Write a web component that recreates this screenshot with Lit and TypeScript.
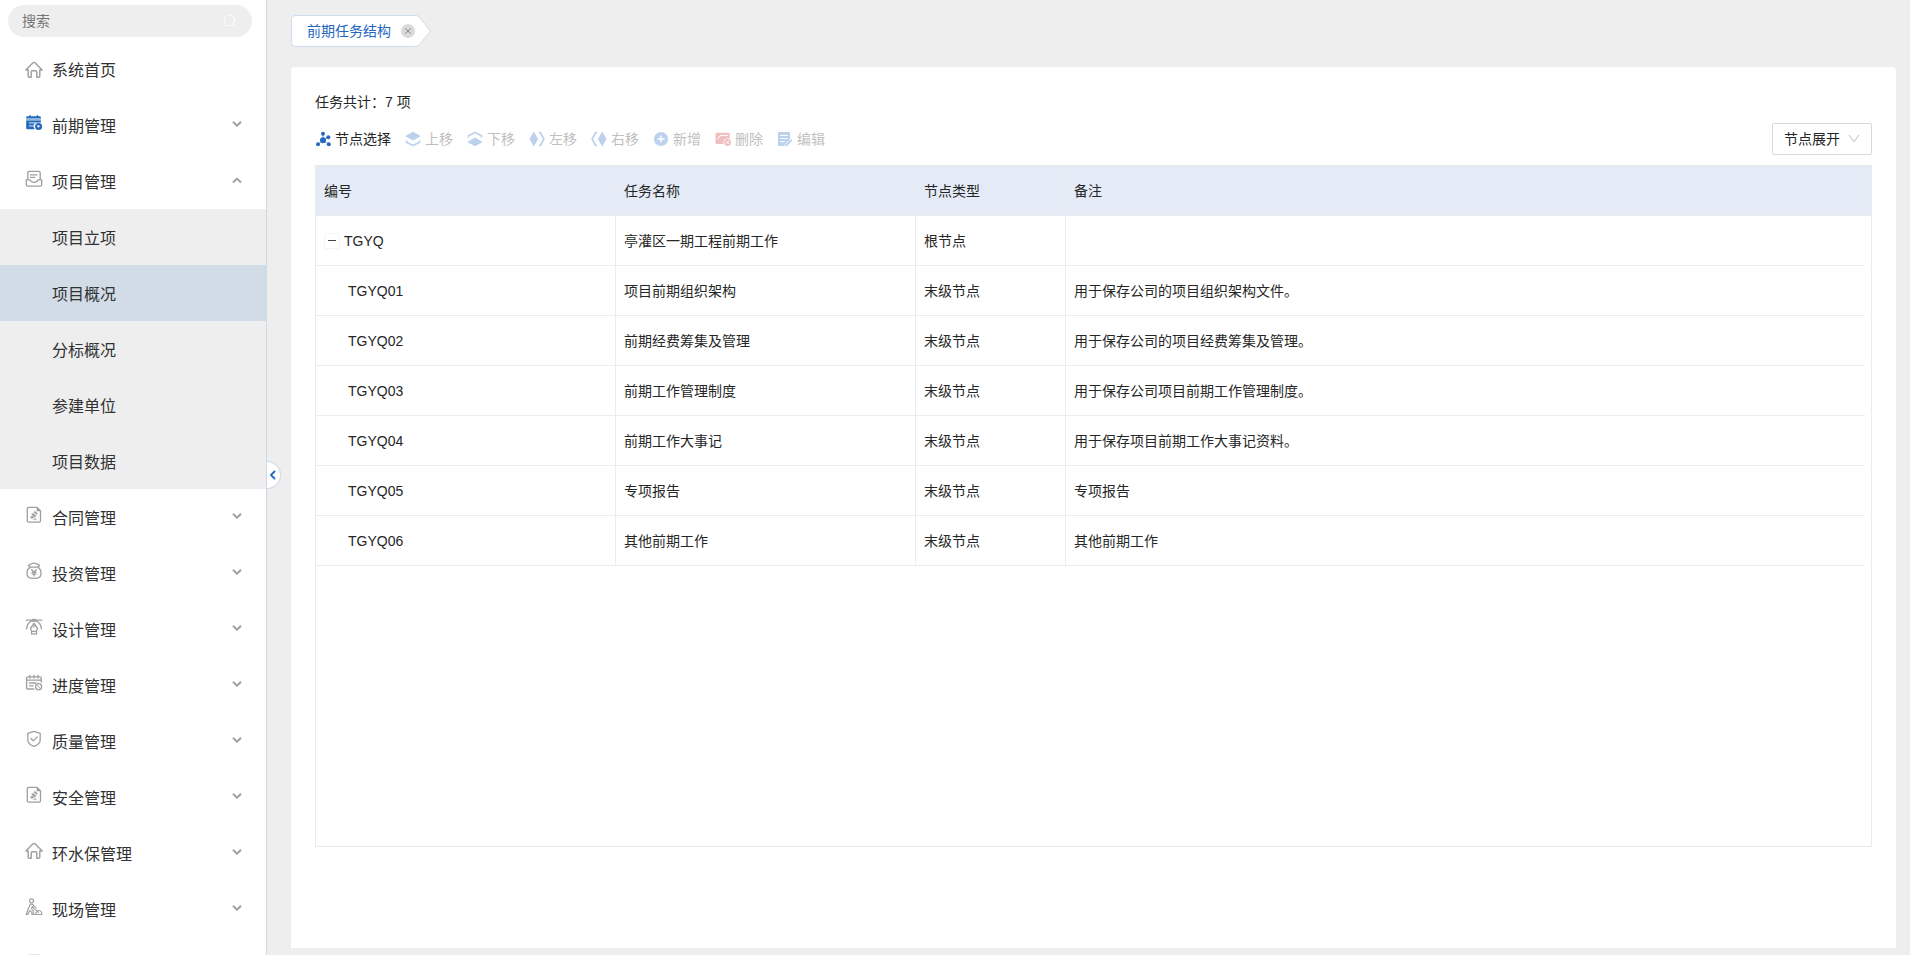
import { LitElement, html, svg, css, nothing } from "lit";
import { customElement, state } from "lit/decorators.js";
import { classMap } from "lit/directives/class-map.js";

const icon = (body: unknown, cls: string, box = "0 0 18 18") =>
  html`<svg class=${cls} viewBox=${box} fill="none" stroke="currentColor" stroke-linecap="round" stroke-linejoin="round">${body}</svg>`;

const permit = svg`<path stroke-width="1.350" d="M3.600 1.400H12L15.500 5v9.800a1.300 1.300 0 0 1-1.300 1.300H3.600a1.300 1.300 0 0 1-1.300-1.300V2.700a1.300 1.300 0 0 1 1.300-1.300z"/><path d="M12 1.600V5h3.400z" fill="currentColor" stroke-width=".6"/><path d="M10 5.200l2.600 2.300-1.100 1-2.600-2.200zM8.100 7.200l3.100 2.700-1.400 1.400-3.100-2.800zM5.300 11.200l1.800-1.400 1.700 1.500-1.600 1.200zM8.800 13.400l1.200-1 1.200 1z" fill="currentColor" stroke-width=".5"/>`;

const glyphs: Record<string, unknown> = {
  home: svg`<path stroke-width="1.450" d="M.9 8.900L8 1.800a1.400 1.400 0 0 1 2 0l7.100 7.100h-2.300v6.400a1 1 0 0 1-1 1h-2V11a1.300 1.300 0 0 0-1.300-1.300h-3A1.300 1.300 0 0 0 6.200 11v5.300h-2a1 1 0 0 1-1-1V8.900z"/>`,
  plan: svg`<g stroke="none"><path fill="#2468b8" d="M2.500 2.300h1.800V1.300h1.500v1h5.800v-1h1.500v1h1.600a1.200 1.200 0 0 1 1.200 1.200v1.100H1.200V3.500a1.200 1.200 0 0 1 1.300-1.200z"/><path fill="#8fb6e2" d="M1.200 4.600h14.700v1.800H1.200z"/><path fill="#2468b8" d="M1.200 6.400h14.700v2H12a4 4 0 0 0-2.300 6.900H2.500a1.300 1.300 0 0 1-1.300-1.300z"/><circle cx="13.600" cy="12.400" r="3.500" fill="#2468b8"/><circle cx="13.400" cy="12.300" r="1.200" fill="#d9e7f6"/></g><path stroke="#dbe8f7" d="M4.300 8.900h6.500M4.300 11.900h4"/>`,
  inbox: svg`<path stroke-width="1.350" d="M2.800 9V2.700a1.300 1.300 0 0 1 1.300-1.300h9.800a1.300 1.300 0 0 1 1.300 1.300V9M1.300 9.800h3.300l2 1.900c.8.800 4 .8 4.800 0l2-1.900h3.300v5a1.300 1.300 0 0 1-1.300 1.300H2.600a1.300 1.300 0 0 1-1.300-1.300zM5.500 4.900H12M5.500 7.400h4.300"/>`,
  permit,
  money: svg`<path stroke-width="1.300" d="M5.500 5.200C3.300 6.300 2 8.600 2 11c0 3.200 2 5.300 4.700 5.300h4.600c2.700 0 4.700-2.100 4.700-5.300 0-2.400-1.300-4.700-3.500-5.800zM5.400 5.200L3.300 3.500l2.300-1.400L9 1l3.400 1.100 2.300 1.400-2.100 1.700"/><path stroke-width="1.400" d="M6.700 7.800L9 10.300l2.300-2.500M9 10v4M7 10.400h4M7 12.100h4"/>`,
  pen: svg`<path stroke-width="1.300" d="M1.200 2.200h15.600M7.700 1.400h2.600v1.800H7.700zM1.500 10.800C2 7 4 4 7 2.900M16.500 10.800C16 7 14 4 11 2.900M9 5.500l-3.600 5 1.500 2.800h4.200l1.500-2.800zM7 15.900h4M6.500 13.300v2.600M11.500 13.300v2.600"/><path d="M9 5v4.500"/>`,
  schedule: svg`<path stroke-width="1.350" d="M1.600 6.100h14.600M16.200 8V4a1.200 1.200 0 0 0-1.200-1.200H2.800A1.200 1.200 0 0 0 1.600 4v9.800A1.200 1.200 0 0 0 2.800 15h6M5 1.400V4M9 1.400V4M13 1.400V4M4.500 9h6.500M4.500 11.800h3.800"/><circle cx="13.600" cy="12.700" r="3" stroke-width="1.300"/><path d="M12.400 11.500l2.200 2.200"/>`,
  shield: svg`<path stroke-width="1.300" d="M9 1.300l6.200 2.100v6.800c0 3-2.600 4.800-6.200 6.200-3.600-1.400-6.200-3.200-6.200-6.200V3.400zM6 8.500l2.300 2.400 4-4"/>`,
  worker: svg`<circle cx="6.500" cy="2.800" r="2" stroke-width="1.200"/><path stroke-width="1.150" d="M5.600 6.200h2.200l1.500 2.200 1.900 1.600M5.300 6.200L3 11.500l-1.700 5h1.500l2-4 1.900 1.600.3 2.400h1.400v-3.400L6.600 11l.7-2.600 1.700 2.200 4.500 3.600M9.800 16.500h7c0-2.300-1.300-4-3-4-1 0-1.600.7-2.200 1.700z"/>`,
};

const items: [string, string, boolean][] = [
  ["系统首页", "home", false],
  ["前期管理", "plan", true],
  ["项目管理", "inbox", true],
  ["合同管理", "permit", true],
  ["投资管理", "money", true],
  ["设计管理", "pen", true],
  ["进度管理", "schedule", true],
  ["质量管理", "shield", true],
  ["安全管理", "permit", true],
  ["环水保管理", "home", true],
  ["现场管理", "worker", true],
  ["", "inbox", true],
];
const children = ["项目立项", "项目概况", "分标概况", "参建单位", "项目数据"];

@customElement("side-menu")
class SideMenu extends LitElement {
  @state() private open = "项目管理";
  @state() private active = "项目概况";

  static styles = css`
    :host { display: flex; flex-direction: column; width: 266px; flex: none; height: 100%; overflow: hidden; background: #fff; border-right: 1px solid #cbdae8; }
    .search { display: flex; align-items: center; justify-content: space-between; flex: none; box-sizing: border-box; width: 244px; height: 32px; margin: 5px 0 4px 8px; padding: 0 15px 0 14px; border-radius: 16px; background: #eee; color: #757575; font-size: 14px; }
    .hint { padding-bottom: 2px; }
    .lens { width: 14px; height: 14px; color: #fff; }
    .item { display: flex; align-items: center; flex: none; height: 56px; padding: 0 24px 0 25px; font-size: 16px; color: #303133; }
    .label { flex: 1; margin-left: 9px; }
    .glyph { width: 18px; height: 18px; color: #a0a0a0; margin-bottom: 4px; }
    .plain .glyph { margin: 2px 0 0; }
    .arrow { width: 10px; height: 8px; color: #a0a0a0; margin-bottom: 2px; }
    .sub { flex: none; background: #eee; }
    .child { display: flex; align-items: center; height: 56px; padding-left: 52px; box-sizing: border-box; font-size: 16px; color: #303133; }
    .active { background: #d2dce6; }
  `;

  render() {
    return html`
      <div class="search"><span class="hint">搜索</span>${icon(svg`<circle cx="6.400" cy="6.400" r="5.400"/><path d="M10.600 10.600L12.600 12.600"/>`, "lens", "0 0 14 14")}</div>
      ${items.map(([name, glyph, branch]) => html`
        <div class=${classMap({ item: true, plain: !branch })}>
          ${icon(glyphs[glyph], "glyph")}<span class="label">${name}</span>
          ${branch ? icon(svg`<path stroke-width="2" stroke-linecap="butt" d=${name === this.open ? "M1 6.500L5 2.600L9 6.500" : "M1 1.800L5 5.700L9 1.800"}/>`, "arrow", "0 0 10 8") : nothing}
        </div>
        ${name === this.open ? html`<div class="sub">${children.map((c) => html`
          <div class=${classMap({ child: true, active: c === this.active })} @click=${() => (this.active = c)}>${c}</div>`)}</div>` : nothing}
      `)}`;
  }
}

const fill = (d: string, color = "#bcd1ec") => svg`<path stroke="none" fill=${color} d=${d}/>`;
const line = (d: string, color = "#bcd1ec", w = "1.5") => svg`<path stroke=${color} stroke-width=${w} d=${d}/>`;

const tools: [string, unknown][] = [
  ["节点选择", [line("M8 9V3M8 9.3l5-3M8 9.3L3 13M8 9.3l5.6 3.7", "#7aa4da", "1"), svg`<g stroke="none" fill="#2468c0"><circle cx="8" cy="9.300" r="3"/><circle cx="8" cy="2.700" r="2"/><circle cx="13.300" cy="6.300" r="2"/><circle cx="3" cy="13.200" r="2"/><circle cx="13.800" cy="13.200" r="2"/></g>`]],
  ["上移", [fill("M8 .8l7.300 4v.6L8 9.500.7 5.400v-.6z"), line("M1.500 10.200v1L8 14.600l6.500-3.400v-1", "#bcd1ec", "1.7")]],
  ["下移", [fill("M8 6.500l7.300 4.200v.6L8 15.300.7 11.300v-.6z"), line("M1.500 5.800v-1L8 1.500l6.500 3.300v1", "#bcd1ec", "1.700")]],
  ["左移", [fill("M5 .8L9 8l-4 7.200h-.5L.6 8l3.900-7.200z"), line("M10.500 1.600h.9L14.800 8l-3.400 6.400h-.9", "#bcd1ec", "1.700")]],
  ["右移", [fill("M11 .8L7 8l4 7.200h.5L15.400 8 11.500.8z"), line("M5.500 1.600h-.9L1.200 8l3.400 6.400h.9", "#bcd1ec", "1.700")]],
  ["新增", [fill("M8 .9a7.100 7.100 0 1 1 0 14.200A7.100 7.100 0 0 1 8 .9z"), line("M8 5v6M5 8h6", "#fff", "1.400")]],
  ["删除", [fill("M2 1.800h11.500a1.200 1.200 0 0 1 1.200 1.200v4.500H12A4 4 0 0 0 8.600 13H1.800A1.300 1.300 0 0 1 .5 11.700V3.200A1.400 1.400 0 0 1 2 1.800z", "#efbfc1"), line("M2.500 8L5.500 4.600h7", "#fff", "1"), fill("M12.600 8a3.500 3.500 0 1 1 0 7 3.500 3.500 0 0 1 0-7z", "#efbfc1"), line("M11.400 10.300l2.400 2.400M13.800 10.300l-2.400 2.400", "#fff", "1")]],
  ["编辑", [fill("M2.300 1h9.400A1.300 1.300 0 0 1 13 2.300v6L7.700 13.600V15H2.300A1.300 1.300 0 0 1 1 13.700V2.300A1.300 1.300 0 0 1 2.300 1z"), line("M3.700 4.500h6.500M3.700 7.500h6.500M3.700 10.600h3.500", "#fff", "1.200"), line("M9.300 14.200l4.800-4.800", "#bcd1ec", "2")]],
];

const rows: [string, string, string, string][] = [
  ["TGYQ", "亭灌区一期工程前期工作", "根节点", ""],
  ["TGYQ01", "项目前期组织架构", "末级节点", "用于保存公司的项目组织架构文件。"],
  ["TGYQ02", "前期经费筹集及管理", "末级节点", "用于保存公司的项目经费筹集及管理。"],
  ["TGYQ03", "前期工作管理制度", "末级节点", "用于保存公司项目前期工作管理制度。"],
  ["TGYQ04", "前期工作大事记", "末级节点", "用于保存项目前期工作大事记资料。"],
  ["TGYQ05", "专项报告", "末级节点", "专项报告"],
  ["TGYQ06", "其他前期工作", "末级节点", "其他前期工作"],
];

@customElement("task-panel")
class TaskPanel extends LitElement {
  static styles = css`
    :host { display: flex; flex-direction: column; flex: 1; box-sizing: border-box; padding: 24px 24px 101px; background: #fff; border-radius: 4px 4px 0 0; color: #262626; font-size: 14px; }
    .count { height: 22px; line-height: 22px; white-space: pre; }
    .bar { display: flex; align-items: center; height: 32px; margin: 10px 0; }
    .tools { display: flex; gap: 14px; flex: 1; }
    .tool { display: flex; align-items: center; gap: 4px; color: #bfbfbf; }
    .tool:first-child { color: #262626; }
    .text { padding-bottom: 2px; }
    .pic { width: 16px; height: 16px; }
    .select { display: flex; align-items: center; justify-content: space-between; box-sizing: border-box; width: 100px; height: 32px; padding: 0 11px; border: 1px solid #d9d9d9; border-radius: 2px; }
    .down { width: 12px; height: 12px; color: #bfbfbf; }
    .table { flex: 1; border: 1px solid #ebebeb; }
    .row { display: grid; grid-template-columns: 300px 300px 150px 1fr; box-sizing: border-box; height: 50px; margin-right: 6px; border-bottom: 1px solid #ebebf0; }
    .head { margin-right: 0; background: #e4ebf6; }
    .cell { display: flex; align-items: center; box-sizing: border-box; padding: 0 0 2px 8px; border-right: 1px solid #ebebf0; }
    .cell:last-child { border-right: 0; }
    .code { padding-bottom: 0; }
    .leaf { padding-left: 32px; }
    .fold { display: flex; align-items: center; justify-content: center; box-sizing: border-box; width: 16px; height: 16px; margin-right: 4px; border: 1px solid #f5f5f5; border-radius: 2px; }
    .minus { width: 8px; height: 1px; background: #444; }
  `;

  render() {
    return html`
      <div class="count">任务共计：7 项</div>
      <div class="bar">
        <div class="tools">${tools.map(([name, body]) => html`<span class="tool">${icon(body, "pic", "0 0 16 16")}<span class="text">${name}</span></span>`)}</div>
        <div class="select"><span class="text">节点展开</span>${icon(svg`<path d="M1.300 2.300L6 8.700l4.700-6.400"/>`, "down", "0 0 12 12")}</div>
      </div>
      <div class="table">
        <div class="row head">${["编号", "任务名称", "节点类型", "备注"].map((h) => html`<div class="cell">${h}</div>`)}</div>
        ${rows.map(([code, ...rest], i) => html`
          <div class="row">
            <div class=${classMap({ cell: true, code: true, leaf: i > 0 })}>${i === 0 ? html`<span class="fold"><span class="minus"></span></span>` : nothing}${code}</div>
            ${rest.map((t) => html`<div class="cell">${t}</div>`)}
          </div>`)}
      </div>`;
  }
}

@customElement("app-root")
class AppRoot extends LitElement {
  static styles = css`
    :host { display: flex; position: relative; height: 100vh; overflow: hidden; background: #eee; font-family: "Liberation Sans", "Noto Sans CJK SC", sans-serif; }
    .main { display: flex; flex-direction: column; flex: 1; padding: 15px 14px 7px 24px; }
    .tab { position: relative; display: flex; align-items: center; width: 141px; height: 32px; margin-bottom: 20px; color: #1f66c0; font-size: 14px; }
    .shape { position: absolute; inset: 0; width: 141px; height: 32px; }
    .name { position: relative; margin-left: 16px; padding-bottom: 2px; }
    .close { position: relative; width: 14px; height: 14px; margin-left: 10px; color: #8a8a8a; }
    .handle { position: absolute; left: 267px; top: 461px; display: flex; align-items: center; box-sizing: border-box; width: 14px; height: 28px; padding-left: 2px; background: #fff; border: 1px solid #cbdae8; border-left: 0; border-radius: 0 14px 14px 0; }
    .chev { width: 7px; height: 10px; color: #2468c0; }
  `;

  render() {
    return html`
      <side-menu></side-menu>
      <div class="main">
        <div class="tab">
          ${icon(svg`<path fill="#fff" stroke="#cbdcec" d="M4.500.500H124.500a5 5 0 0 1 4 2L139.500 16L128.500 29.500a5 5 0 0 1-4 2H4.500a4 4 0 0 1-4-4V4.500a4 4 0 0 1 4-4z"/>`, "shape", "0 0 141 32")}
          <span class="name">前期任务结构</span>
          ${icon(svg`<circle cx="7" cy="7" r="7" fill="#dadada" stroke="none"/><path d="M4.500 4.500l5 5M9.500 4.500l-5 5"/>`, "close", "0 0 14 14")}
        </div>
        <task-panel></task-panel>
      </div>
      <div class="handle">${icon(svg`<path stroke-width="1.800" d="M5.500 1.500L2 5l3.500 3.500"/>`, "chev", "0 0 7 10")}</div>`;
  }
}
